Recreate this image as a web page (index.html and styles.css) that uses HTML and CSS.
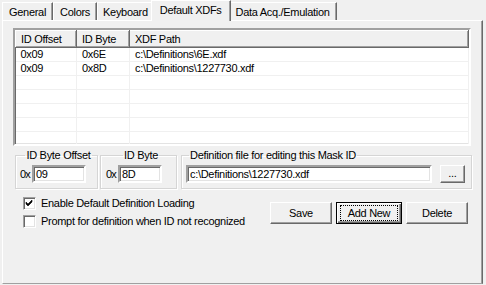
FILE: index.html
```html
<!DOCTYPE html>
<html>
<head>
    <title>Default XDFs</title>
    <link rel="stylesheet" href="styles.css">
</head>
<body>
    <div class="tabs">
        <div class="tab">General</div>
        <div class="tab">Colors</div>
        <div class="tab tab-keyboard">Keyboard</div>
        <div class="tab active">Default XDFs</div>
        <div class="tab">Data Acq./Emulation</div>
    </div>

    <div class="panel">
        <div class="list">
            <table>
                <thead>
                    <tr>
                        <th class="col-offset">ID Offset</th>
                        <th class="col-byte">ID Byte</th>
                        <th class="col-path">XDF Path</th>
                    </tr>
                </thead>
                <tbody>
                    <tr><td>0x09</td><td>0x6E</td><td>c:\Definitions\6E.xdf</td></tr>
                    <tr><td>0x09</td><td>0x8D</td><td>c:\Definitions\1227730.xdf</td></tr>
                    <tr><td></td><td></td><td></td></tr>
                    <tr><td></td><td></td><td></td></tr>
                    <tr><td></td><td></td><td></td></tr>
                    <tr><td></td><td></td><td></td></tr>
                    <tr><td></td><td></td><td></td></tr>
                </tbody>
            </table>
        </div>

        <div class="groups">
            <fieldset class="group group-offset">
                <legend class="centered">ID Byte Offset</legend>
                <div class="field-row">
                    <span class="prefix">0x</span>
                    <div class="textbox box-offset">09</div>
                </div>
            </fieldset>
            <fieldset class="group group-byte">
                <legend class="centered">ID Byte</legend>
                <div class="field-row">
                    <span class="prefix">0x</span>
                    <div class="textbox box-byte">8D</div>
                </div>
            </fieldset>
            <fieldset class="group group-file">
                <legend>Definition file for editing this Mask ID</legend>
                <div class="field-row">
                    <div class="textbox box-file">c:\Definitions\1227730.xdf</div>
                    <div class="button browse">...</div>
                </div>
            </fieldset>
        </div>

        <div class="bottom">
            <div class="checks">
                <div class="check-row">
                    <span class="checkbox">
                        <svg width="9" height="9" viewBox="0 0 9 9">
                            <path d="M1 3 L3 5 L7 1 L7 3 L3 7 L1 5 Z" fill="#000" stroke="#000" stroke-width="0.6"/>
                        </svg>
                    </span>
                    <span>Enable Default Definition Loading</span>
                </div>
                <div class="check-row">
                    <span class="checkbox"></span>
                    <span>Prompt for definition when ID not recognized</span>
                </div>
            </div>
            <div class="buttons">
                <div class="button btn-save">Save</div>
                <div class="button btn-add default">
                    <span class="focus">Add New</span>
                </div>
                <div class="button btn-delete">Delete</div>
            </div>
        </div>
    </div>
</body>
</html>
```

FILE: styles.css
```css
body {
    margin: 0;
    width: 486px;
    height: 285px;
    overflow: hidden;
    background-color: #f0f0f0;
    font-family: "Liberation Sans", Arial, sans-serif;
    font-size: 11px;
    letter-spacing: -0.3px;
    color: #000;
}

/* tab strip */

.tabs {
    display: flex;
    align-items: flex-end;
    height: 20px;
    padding-left: 2px;
}

.tab {
    box-sizing: border-box;
    height: 18px;
    padding: 2px 6px 0 6px;
    border-top: 1px solid #fff;
    border-left: 1px solid #fff;
    border-right: 1px solid #696969;
    box-shadow: inset -1px 0 #a0a0a0;
    line-height: 14px;
    white-space: nowrap;
}

.tab-keyboard {
    padding: 2px 4px 0 5px;
}

.tab.active {
    position: relative;
    z-index: 1;
    height: 21px;
    margin: 0 -2px -1px -2px;
    padding: 2px 8px 0 8px;
    background-color: #f0f0f0;
}

/* tab page */

.panel {
    box-sizing: border-box;
    width: 481px;
    height: 264px;
    margin-left: 2px;
    padding: 7px 9px 0 10px;
    border-top: 1px solid #fff;
    border-left: 1px solid #fff;
    border-right: 1px solid #696969;
    border-bottom: 1px solid #a0a0a0;
    box-shadow: inset -1px 0 #a0a0a0;
}

/* list view */

.list {
    box-sizing: border-box;
    width: 458px;
    height: 118px;
    border: 2px solid;
    border-color: #a0a0a0 #fff #fff #a0a0a0;
    box-shadow: inset 1px 1px #696969, inset -1px -1px #e3e3e3;
    background-color: #fff;
    overflow: hidden;
}

.list table {
    width: 100%;
    border-collapse: collapse;
    table-layout: fixed;
}

.list th {
    box-sizing: border-box;
    height: 17px;
    padding: 0 5px;
    text-align: left;
    font-weight: normal;
    background-color: #f0f0f0;
    border-top: 1px solid #fff;
    border-left: 1px solid #fff;
    border-right: 1px solid #696969;
    border-bottom: 1px solid #696969;
    box-shadow: inset -1px -1px #a0a0a0;
    line-height: 14px;
}

.col-offset {
    width: 61px;
}

.col-byte {
    width: 53px;
}

.list td {
    height: 13px;
    padding: 0 5px;
    border-right: 1px solid #f0f0f0;
    border-bottom: 1px solid #f0f0f0;
    line-height: 13px;
    white-space: nowrap;
}

/* group boxes */

.groups {
    display: flex;
    margin-top: 3px;
    padding-left: 2px;
}

.group {
    box-sizing: border-box;
    height: 40px;
    margin: 0;
    padding: 3px 0 0 0;
    border: 1px solid #d5d5d5;
    box-shadow: 1px 1px #fff, inset 1px 1px #fff;
}

.group legend {
    padding: 0 1px;
    margin-left: 3px;
    line-height: 13px;
}

.group legend.centered {
    margin-left: auto;
    margin-right: auto;
}

.group-offset {
    width: 83px;
    padding-left: 4px;
}

.group-byte {
    width: 77px;
    margin-left: 2px;
    padding-left: 5px;
}

.group-file {
    width: 291px;
    margin-left: 4px;
    padding-left: 4px;
}

.field-row {
    display: flex;
    align-items: center;
}

.prefix {
    width: 12px;
    letter-spacing: -0.8px;
}

.textbox {
    box-sizing: border-box;
    height: 18px;
    padding: 0 2px;
    border: 2px solid;
    border-color: #a0a0a0 #fff #fff #a0a0a0;
    box-shadow: inset 1px 1px #696969, inset -1px -1px #e3e3e3;
    background-color: #fff;
    line-height: 14px;
    white-space: nowrap;
    overflow: hidden;
}

.box-offset {
    width: 54px;
}

.box-byte {
    width: 44px;
}

.box-file {
    width: 246px;
}

/* buttons */

.button {
    box-sizing: border-box;
    display: flex;
    align-items: center;
    justify-content: center;
    background-color: #f0f0f0;
    border-top: 1px solid #fff;
    border-left: 1px solid #fff;
    border-right: 1px solid #696969;
    border-bottom: 1px solid #696969;
    box-shadow: inset -1px -1px #a0a0a0;
}

.browse {
    width: 25px;
    height: 18px;
    margin-left: 8px;
    padding-bottom: 3px;
}

/* checkboxes and action buttons */

.bottom {
    display: flex;
    align-items: flex-start;
    margin-top: 5px;
}

.checks {
    display: flex;
    flex-direction: column;
    padding-left: 10px;
}

.check-row {
    display: flex;
    align-items: center;
    height: 18px;
}

.checkbox {
    box-sizing: border-box;
    display: flex;
    align-items: center;
    justify-content: center;
    width: 13px;
    height: 13px;
    margin-right: 5px;
    border: 1px solid;
    border-color: #a0a0a0 #fff #fff #a0a0a0;
    box-shadow: inset 1px 1px #696969, inset -1px -1px #e3e3e3;
    background-color: #fff;
}

.buttons {
    display: flex;
    gap: 4px;
    margin: 8px 5px 0 auto;
}

.buttons .button {
    height: 22px;
}

.btn-save,
.btn-delete {
    width: 62px;
}

.btn-add {
    width: 66px;
}

.button.default {
    border: 1px solid #000;
    box-shadow: inset 1px 1px #fff, inset -1px -1px #696969, inset -2px -2px #a0a0a0;
}

.focus {
    display: flex;
    align-items: center;
    justify-content: center;
    width: 56px;
    height: 14px;
    outline: 1px dotted #000;
}
```
